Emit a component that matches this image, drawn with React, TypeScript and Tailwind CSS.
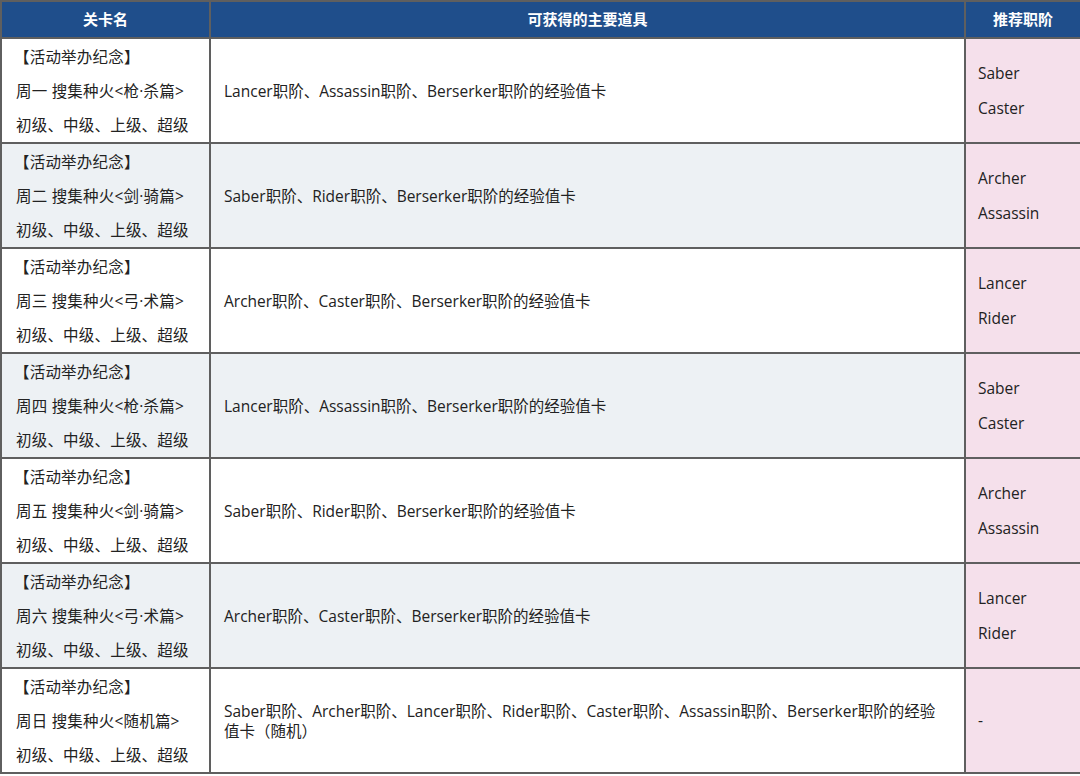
import React from "react";

type Row = {
  day: string;
  stage: string;
  items: React.ReactNode;
  classes: string[];
};

const rows: Row[] = [
  {day: "周一", stage: "枪·杀篇", items: "Lancer职阶、Assassin职阶、Berserker职阶的经验值卡", classes: ["Saber", "Caster"]},
  {day: "周二", stage: "剑·骑篇", items: "Saber职阶、Rider职阶、Berserker职阶的经验值卡", classes: ["Archer", "Assassin"]},
  {day: "周三", stage: "弓·术篇", items: "Archer职阶、Caster职阶、Berserker职阶的经验值卡", classes: ["Lancer", "Rider"]},
  {day: "周四", stage: "枪·杀篇", items: "Lancer职阶、Assassin职阶、Berserker职阶的经验值卡", classes: ["Saber", "Caster"]},
  {day: "周五", stage: "剑·骑篇", items: "Saber职阶、Rider职阶、Berserker职阶的经验值卡", classes: ["Archer", "Assassin"]},
  {day: "周六", stage: "弓·术篇", items: "Archer职阶、Caster职阶、Berserker职阶的经验值卡", classes: ["Lancer", "Rider"]},
  {
    day: "周日",
    stage: "随机篇",
    items: (
      <>
        Saber职阶、Archer职阶、Lancer职阶、Rider职阶、Caster职阶、Assassin职阶、Berserker职阶的经验
        <br />
        值卡（随机）
      </>
    ),
    classes: ["-"],
  },
];

export default function App() {
  return (
    <div className="w-[1080px] h-[776px] bg-white text-[#222] font-['Open_Sans','Noto_Sans_CJK_SC',sans-serif]">
      <table className="w-[1080px] border-collapse table-fixed">
        <colgroup>
          <col className="w-[209px]" />
          <col className="w-[755px]" />
          <col className="w-[116px]" />
        </colgroup>
        <thead>
          <tr className="h-[37px] bg-[#1f4e8b] text-white text-[15px] font-bold">
            <th className="border-2 border-[#5f5f5f] p-0 font-bold">关卡名</th>
            <th className="border-2 border-[#5f5f5f] p-0 font-bold">可获得的主要道具</th>
            <th className="border-2 border-[#5f5f5f] p-0 font-bold">推荐职阶</th>
          </tr>
        </thead>
        <tbody>
          {rows.map((r, i) => (
            <tr key={i} className={`h-[105px] text-[15.5px] ${i % 2 === 1 ? "bg-[#edf1f4]" : "bg-white"}`}>
              <td className="border-2 border-[#5f5f5f] p-0 pl-[14px] align-middle">
                <div className="flex flex-col leading-[34px] tracking-[0.2px]">
                  <span className="-ml-[2px]">【活动举办纪念】</span>
                  <span>
                    {r.day} 搜集种火&lt;{r.stage}&gt;
                  </span>
                  <span>初级、中级、上级、超级</span>
                </div>
              </td>
              <td className="border-2 border-[#5f5f5f] p-0 pl-[13px] leading-[20px] align-middle">{r.items}</td>
              <td className="border-2 border-[#5f5f5f] bg-[#f5e0eb] p-0 pl-[12px] align-middle">
                <div className="flex flex-col leading-[35px]">
                  {r.classes.map((c) => (
                    <span key={c}>{c}</span>
                  ))}
                </div>
              </td>
            </tr>
          ))}
        </tbody>
      </table>
    </div>
  );
}
